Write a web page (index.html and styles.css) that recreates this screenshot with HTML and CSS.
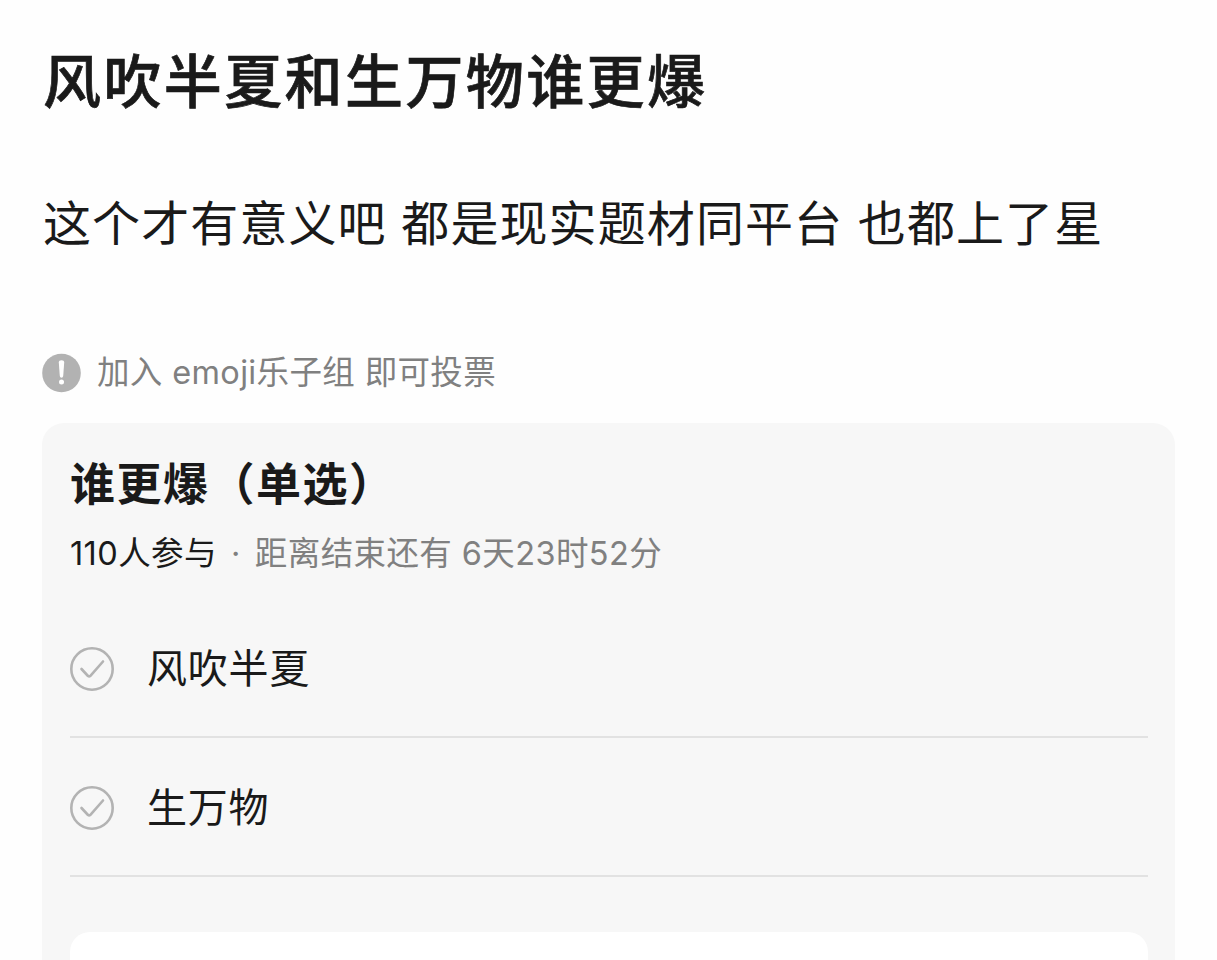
FILE: index.html
```html
<!DOCTYPE html>
<html lang="zh-CN">

<head>
    <meta charset="utf-8">
    <title>风吹半夏和生万物谁更爆</title>
    <link rel="stylesheet" href="styles.css">
</head>

<body>
    <div class="post">
        <h1 class="title">风吹半夏和生万物谁更爆</h1>
        <p class="content">这个才有意义吧 都是现实题材同平台 也都上了星</p>
        <div class="notice">
            <svg class="notice-icon" viewBox="0 0 40 40">
                <circle cx="19.5" cy="20" r="19.3" fill="#b2b2b2"/>
                <path d="M16.8 9.5q0-2.3 2.7-2.3t2.7 2.3l-1 13.5q-.2 1.8-1.7 1.8t-1.7-1.8z" fill="#fff"/>
                <circle cx="19.5" cy="29" r="2.5" fill="#fff"/>
            </svg>
            <span class="notice-text">加入 emoji乐子组 即可投票</span>
        </div>
        <div class="poll">
            <h2 class="poll-title">谁更爆（单选）</h2>
            <div class="poll-meta"><span class="count">110人参与</span><span class="dot">·</span><span class="deadline">距离结束还有 6天23时52分</span></div>
            <ul class="options">
                <li class="option">
                    <svg class="check" viewBox="0 0 44 44">
                        <circle cx="22" cy="22" r="20.7"/>
                        <path d="M11.5 22l6.5 7q1.2 1 2.4-.2L33 14.5"/>
                    </svg>
                    <span class="option-text">风吹半夏</span>
                </li>
                <li class="option">
                    <svg class="check" viewBox="0 0 44 44">
                        <circle cx="22" cy="22" r="20.7"/>
                        <path d="M11.5 22l6.5 7q1.2 1 2.4-.2L33 14.5"/>
                    </svg>
                    <span class="option-text">生万物</span>
                </li>
            </ul>
            <div class="submit"></div>
        </div>
    </div>
</body>

</html>
```

FILE: styles.css
```css
* {
    box-sizing: border-box;
}

body {
    margin: 0;
    background: #fefefe;
    color: #1a1a1a;
    font-family: Inter, "Noto Sans CJK SC", sans-serif;
}

.post {
    display: flex;
    flex-direction: column;
    height: 960px;
    padding: 42px 42px 0;
}

.title {
    margin: 0;
    height: 80px;
    padding-left: 1px;
    font-size: 58px;
    line-height: 80px;
    font-weight: 500;
    letter-spacing: 2.4px;
    -webkit-text-stroke: 0.7px #1a1a1a;
    white-space: nowrap;
}

.content {
    margin: 67px 0 0;
    height: 70px;
    padding-left: 1px;
    font-size: 48px;
    line-height: 70px;
    letter-spacing: 1.1px;
    white-space: nowrap;
}

.notice {
    display: flex;
    align-items: center;
    height: 50px;
    margin-top: 89px;
    color: #808080;
    font-size: 32.5px;
    letter-spacing: 0.35px;
}

.notice-icon {
    width: 40px;
    height: 40px;
    margin-right: 15px;
}

.notice-text {
    line-height: 50px;
    white-space: nowrap;
}

.poll {
    flex: 1;
    display: flex;
    flex-direction: column;
    margin-top: 25px;
    padding: 32px 27px 0 28px;
    border-radius: 22px 22px 0 0;
    background: #f7f7f7;
}

.poll-title {
    margin: 0;
    font-size: 45px;
    line-height: 60px;
    font-weight: 700;
    letter-spacing: 1.5px;
    white-space: nowrap;
}

.poll-meta {
    height: 50px;
    margin-top: 14px;
    font-size: 32.5px;
    line-height: 50px;
    letter-spacing: 0.4px;
    color: #808080;
    white-space: nowrap;
}

.count {
    color: #1a1a1a;
}

.dot {
    display: inline-block;
    width: 38px;
    text-align: center;
}

.options {
    margin: 20px 0 0;
    padding: 0;
    list-style: none;
}

.option {
    display: flex;
    align-items: center;
    height: 139px;
    padding-top: 2px;
    border-bottom: 2px solid #e2e2e2;
}

.check {
    width: 44px;
    height: 44px;
    margin-right: 33px;
    fill: none;
    stroke: #b3b3b3;
    stroke-width: 2.6;
    stroke-linecap: round;
    stroke-linejoin: round;
}

.option-text {
    padding-top: 1px;
    font-size: 40px;
    line-height: 60px;
    letter-spacing: 0.8px;
}

.submit {
    flex: 1;
    margin-top: 55px;
    border-radius: 20px 20px 0 0;
    background: #fff;
}
```
